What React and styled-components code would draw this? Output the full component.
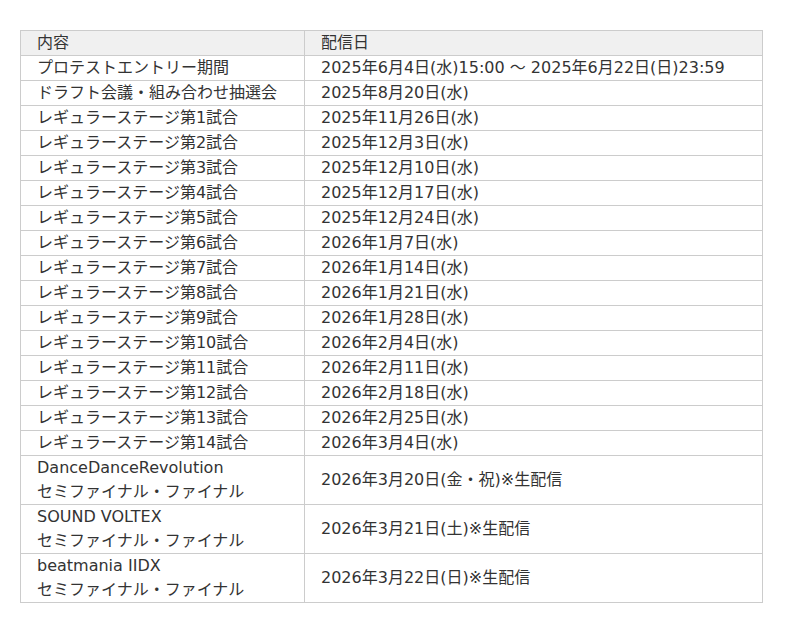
import React from 'react';
import styled, { createGlobalStyle } from 'styled-components';

const GlobalStyle = createGlobalStyle`
  body {
    margin: 0;
    background: #ffffff;
    font-family: 'DejaVu Sans', 'Noto Sans CJK JP', sans-serif;
  }
`;

const Page = styled.div`
  padding: 30px 20px;
`;

const Table = styled.table`
  width: 743px;
  border-collapse: collapse;
  font-size: 16px;
  line-height: 24px;
  color: #333333;
`;

const Head = styled.th`
  background: #f0f0f0;
  font-weight: normal;
  text-align: left;
  border: 1px solid #cccccc;
  padding: 0 16px;
  width: ${props => props.$width || 'auto'};
`;

const Cell = styled.td`
  border: 1px solid #cccccc;
  padding: 0 16px;
  vertical-align: middle;
  white-space: nowrap;
`;

const Line = styled.div``;

const rows = [
  ['プロテストエントリー期間', '2025年6月4日(水)15:00 ～ 2025年6月22日(日)23:59'],
  ['ドラフト会議・組み合わせ抽選会', '2025年8月20日(水)'],
  ['レギュラーステージ第1試合', '2025年11月26日(水)'],
  ['レギュラーステージ第2試合', '2025年12月3日(水)'],
  ['レギュラーステージ第3試合', '2025年12月10日(水)'],
  ['レギュラーステージ第4試合', '2025年12月17日(水)'],
  ['レギュラーステージ第5試合', '2025年12月24日(水)'],
  ['レギュラーステージ第6試合', '2026年1月7日(水)'],
  ['レギュラーステージ第7試合', '2026年1月14日(水)'],
  ['レギュラーステージ第8試合', '2026年1月21日(水)'],
  ['レギュラーステージ第9試合', '2026年1月28日(水)'],
  ['レギュラーステージ第10試合', '2026年2月4日(水)'],
  ['レギュラーステージ第11試合', '2026年2月11日(水)'],
  ['レギュラーステージ第12試合', '2026年2月18日(水)'],
  ['レギュラーステージ第13試合', '2026年2月25日(水)'],
  ['レギュラーステージ第14試合', '2026年3月4日(水)'],
];

const finals = [
  ['DanceDanceRevolution', '2026年3月20日(金・祝)※生配信'],
  ['SOUND VOLTEX', '2026年3月21日(土)※生配信'],
  ['beatmania IIDX', '2026年3月22日(日)※生配信'],
];

export default function App() {
  return (
    <Page>
      <GlobalStyle />
      <Table>
        <thead>
          <tr>
            <Head $width="251px">内容</Head>
            <Head>配信日</Head>
          </tr>
        </thead>
        <tbody>
          {rows.map(([name, date]) => (
            <tr key={name}>
              <Cell>{name}</Cell>
              <Cell>{date}</Cell>
            </tr>
          ))}
          {finals.map(([game, date]) => (
            <tr key={game}>
              <Cell>
                <Line>{game}</Line>
                <Line>セミファイナル・ファイナル</Line>
              </Cell>
              <Cell>{date}</Cell>
            </tr>
          ))}
        </tbody>
      </Table>
    </Page>
  );
}
